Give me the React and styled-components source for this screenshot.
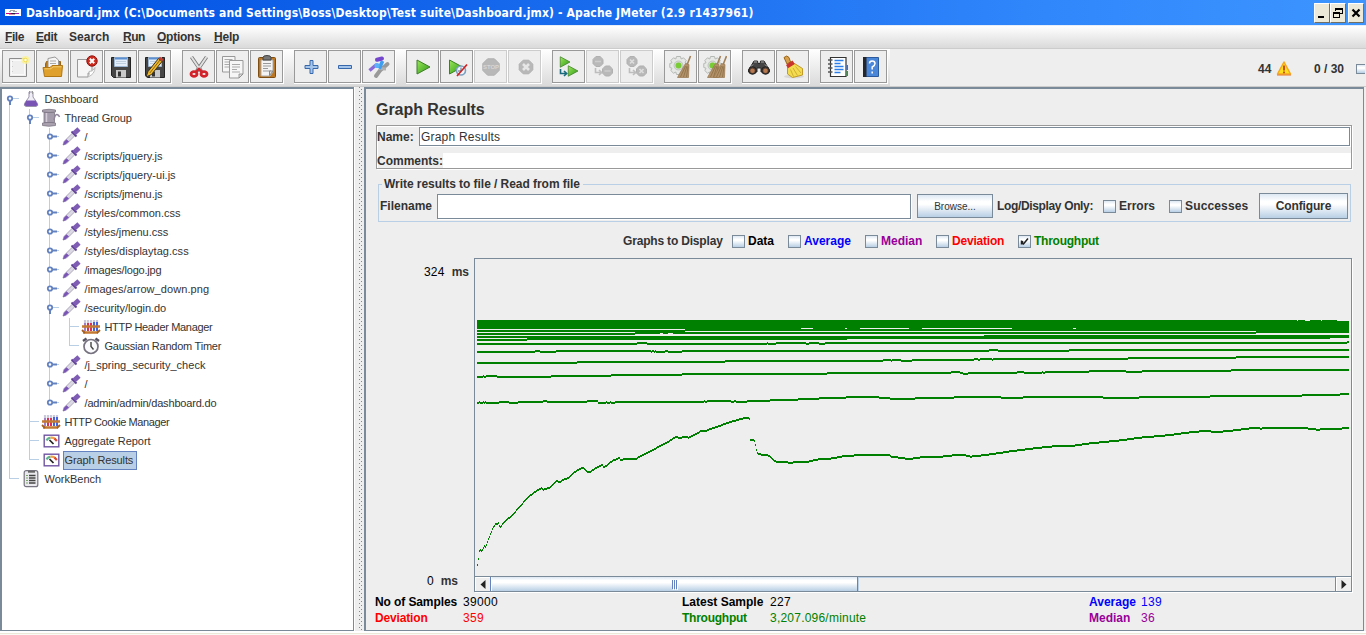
import React from 'react';
import styled, { createGlobalStyle, css } from 'styled-components';

const Global = createGlobalStyle`
  * { box-sizing: border-box; }
  body { margin: 0; background: #eee; overflow: hidden; }
`;

const metal = 'linear-gradient(180deg, #dde8f3 0%, #fff 30%, #fff 42%, #b8cfe5 100%)';
const edge = '#7a8a99';

const Window = styled.div`
  width: 1366px;
  height: 635px;
  display: flex;
  flex-direction: column;
  background: #eee;
  color: #333;
  font-family: 'Liberation Sans', Arial, sans-serif;
  font-size: 12px;
  line-height: 14px;
  white-space: pre;
  overflow: hidden;
`;
const Label = styled.span`
  font-weight: ${p => (p.$plain ? 400 : 700)};
  letter-spacing: ${p => p.$ls || 0}px;
  color: ${p => p.$color || 'inherit'};
  width: ${p => (p.$w ? `${p.$w}px` : 'auto')};
  flex: none;
`;
const Spacer = styled.span`
  width: ${p => p.$w}px;
  flex: none;
`;

/* title bar */
const TitleBar = styled.header`
  height: 25px;
  flex: none;
  display: flex;
  align-items: center;
  padding: 0 2px 0 5px;
  background: linear-gradient(90deg, #0054e3 0%, #0a5ce8 18%, #1a6cee 45%, #2f86fb 75%, #3d95ff 100%);
  color: #fff;
`;
const TitleText = styled.h1`
  flex: 1;
  margin: 0 0 0 5px;
  font: 700 12px/16px 'DejaVu Sans Condensed', 'DejaVu Sans', sans-serif;
  font-stretch: condensed;
  letter-spacing: 0.15px;
`;
const WinButton = styled.button`
  width: 16px;
  height: 20px;
  margin: 0 0 0 ${p => (p.$gap ? 2 : 0)}px;
  padding: 0;
  display: flex;
  border: 1px solid;
  border-color: #fff #716f64 #716f64 #fff;
  background: #ece9d8;
`;

/* menu */
const MenuBar = styled.nav`
  height: 24px;
  flex: none;
  display: flex;
  align-items: center;
  padding: 0 0 1px 5px;
  border-top: 1px solid #e8eef8;
  border-bottom: 1px solid #ccc;
  background: linear-gradient(180deg, #fff, #dadada);
`;
const MenuItem = styled.span`
  width: ${p => p.$w}px;
  font-weight: 700;
  letter-spacing: ${p => p.$ls || 0}px;
`;
const Mnemonic = styled.span`
  text-decoration: underline;
  text-decoration-thickness: 1px;
  text-underline-offset: 1px;
  text-decoration-skip-ink: none;
`;

/* toolbar */
const ToolBar = styled.div`
  height: 37px;
  flex: none;
  display: flex;
  justify-content: space-between;
`;
const ToolButtons = styled.div`
  width: 890px;
  display: flex;
  gap: 10px;
  padding: 1px 0 0 2px;
  background: linear-gradient(180deg, #fff, #dadada);
`;
const ToolGroup = styled.div`display: flex;`;
const ToolButton = styled.button`
  width: 34px;
  height: 34px;
  padding: 0;
  border: 0;
  background: #fff;
  display: flex;
`;
const ToolFace = styled.span`
  width: 33px;
  height: 33px;
  display: flex;
  align-items: center;
  justify-content: center;
  border: 1px solid ${p => (p.$off ? '#ccc' : '#999')};
  background: #eee;
`;
const Status = styled.div`
  display: flex;
  align-items: center;
  padding-top: 2px;
`;
const HeapBar = styled.span`
  width: 9px;
  height: 10px;
  margin-left: 12px;
  margin-right: 1px;
  border: 1px solid ${edge};
  border-right: 0;
  background: ${metal};
`;

/* split */
const Split = styled.main`
  flex: 1;
  display: flex;
  border-top: 1px solid #ccc;
  min-height: 0;
`;
const Footer = styled.footer`
  height: 4px;
  flex: none;
  border-top: 2px solid #fff;
  border-bottom: 1px solid #faf9f4;
  background: #ece9d8;
`;
const TreePane = styled.section`
  width: 354px;
  flex: none;
  border: solid ${edge};
  border-width: 2px 1px 1px 2px;
  background: #fff;
  padding-top: 1px;
`;
const Divider = styled.div`
  width: 10px;
  flex: none;
  padding-left: 4px;
  border-left: 1px solid #fff;
`;
const Dots = styled.div`
  width: 4px;
  height: 100%;
  background-image: linear-gradient(#7a8a99, #7a8a99), linear-gradient(#7a8a99, #7a8a99);
  background-size: 1px 4px, 1px 4px;
  background: conic-gradient(from 0deg at 1px 1px, transparent 75%, #7a8a99 0) 0 0 / 4px 4px,
    conic-gradient(from 0deg at 1px 1px, transparent 75%, #7a8a99 0) 2px 2px / 4px 4px;
`;
const Row = styled.div`
  height: 19px;
  display: flex;
  align-items: center;
  font-size: 11px;
`;
const NodeIcon = styled.span`
  width: 20px;
  height: 19px;
  margin: -1px 1px 1px -1px;
  display: flex;
  align-items: center;
  justify-content: center;
  flex: none;
`;
const NodeName = styled.span`
  line-height: 17px;
  height: 19px;
  padding: 0 2px 0 0.5px;
  margin-left: 1px;
  border: 1px solid transparent;
  letter-spacing: ${p => p.$ls || 0}px;
  ${p => p.$selected && css`
    width: 74px;
    background: #b8cfe5;
    border-color: #6382bf;
  `}
`;

/* right pane */
const ResultPane = styled.section`
  flex: 1;
  min-width: 0;
  margin-right: 2px;
  padding: 0 11px 0 9px;
  border: solid ${edge};
  border-width: 2px 1px 1px 2px;
  display: flex;
  flex-direction: column;
`;
const Heading = styled.h2`
  margin: 11px 0 0 1px;
  height: 25px;
  font-size: 16px;
  line-height: 20px;
  font-weight: 700;
  letter-spacing: -0.05px;
`;
const InfoBox = styled.div`
  margin-left: 1px;
  height: 44px;
  flex: none;
  border: 1px solid #999;
  box-shadow: inset 1px 1px #fff, 1px 1px #fff;
  padding: 1px 1px 0 0;
`;
const InfoRow = styled.div`
  display: flex;
  align-items: center;
  height: ${p => p.$h}px;
  margin-top: ${p => p.$mt || 0}px;
  margin-right: ${p => p.$mr || 0}px;
`;
const Field = styled.div`
  flex: ${p => (p.$w ? 'none' : 1)};
  width: ${p => (p.$w ? `${p.$w}px` : 'auto')};
  height: ${p => p.$h}px;
  padding-left: 1px;
  border: ${p => (p.$bare ? 0 : 1)}px solid ${edge};
  box-shadow: ${p => (p.$bare ? 'none' : '1px 1px #fff')};
  background: #fff;
  line-height: 19px;
`;
const FileBox = styled.fieldset`
  margin: 8px 1px 0 3px;
  height: 45px;
  flex: none;
  min-width: 0;
  padding: 1px 1px 0 0;
  border: 1px solid #b8cfe5;
  display: flex;
  align-items: flex-start;
`;
const Legend = styled.legend`
  margin-left: 3px;
  padding: 0 3px 0 2px;
  font-weight: 700;
  letter-spacing: -0.05px;
  line-height: 14px;
`;
const FileRow = styled.div`
  display: flex;
  align-items: center;
  height: 28px;
  padding-left: 1px;
`;
const Button = styled.button`
  width: ${p => p.$w}px;
  height: ${p => p.$h}px;
  padding: 0;
  margin: 0 0 0 ${p => p.$ml}px;
  border: 1px solid ${edge};
  background: ${metal};
  color: #333;
  font: ${p => (p.$small ? '400 10px' : '700 12px')} 'Liberation Sans', Arial, sans-serif;
  letter-spacing: ${p => p.$ls || 0}px;
  flex: none;
`;
const CheckItem = styled.label`
  width: ${p => p.$w}px;
  display: flex;
  align-items: center;
  gap: 3px;
  flex: none;
`;
const Box = styled.span`
  width: 13px;
  height: 13px;
  border: 1px solid ${edge};
  background: ${metal};
  display: flex;
  flex: none;
`;
const Series = styled.div`
  display: flex;
  align-items: center;
  height: 20px;
  margin: 9px 0 0 248px;
  flex: none;
`;
const GraphRow = styled.div`
  display: flex;
  height: 334px;
  margin-top: 7px;
  flex: none;
`;
const Axis = styled.div`
  width: 99px;
  flex: none;
  display: flex;
  flex-direction: column;
  justify-content: space-between;
  padding: 7px 0 4px;
`;
const AxisLabel = styled.div`
  display: flex;
  gap: 7px;
  padding-left: ${p => p.$pl}px;
`;
const Plot = styled.div`
  width: 878px;
  border: 1px solid ${edge};
  box-shadow: 1px 1px #fff;
  display: flex;
  flex-direction: column;
`;
const Canvas = styled.div`height: 317px; padding-left: 2px; overflow: hidden;`;
const ScrollBar = styled.div`
  height: 15px;
  flex: none;
  display: flex;
  border-top: 1px solid ${edge};
`;
const Arrow = styled.span`
  width: 15px;
  display: flex;
  align-items: center;
  justify-content: center;
  box-shadow: inset 1px 1px #fff;
`;
const Thumb = styled.span`
  width: 368px;
  border: 1px solid #6382bf;
  border-width: 0 1px;
  box-shadow: 1px 0 #b8cfe5, inset 1px 0 #fff;
  background: linear-gradient(180deg, #dde8f3, #fff 25%, #fff 40%, #b8cfe5);
  display: flex;
  align-items: center;
  justify-content: center;
  gap: 1px;
`;
const Grip = styled.i`width: 1px; height: 9px; background: #6382bf; box-shadow: 1px 1px #fff;`;
const Track = styled.span`flex: 1; border-right: 1px solid ${edge}; box-shadow: inset 0 1px #b8cfe5;`;
const Stats = styled.div`
  display: grid;
  grid-template-columns: 88px 219px 88px 319px 52px 1fr;
  grid-auto-rows: 16px;
  margin-top: 3px;
`;

/* toolbar drawings */
const S = ({ children, size = 24 }) => (
  <svg width={size} height={size} viewBox="0 0 24 24" fill="none">{children}</svg>
);
const Page = ({ x = 0, y = 0, w = 15, h = 18 }) => (
  <g transform={`translate(${x} ${y})`}>
    <path d={`M.5 .5H${w}V${h - 4}L${w - 4} ${h}H.5Z`} fill="#f6f6f6" stroke="#999" />
    <path d={`M${w} ${h - 4}H${w - 4}V${h}Z`} fill="#ddd" stroke="#888" strokeWidth=".8" />
  </g>
);
const Lines = ({ x, y, n = 4, w = 8, c = '#aaa' }) => (
  <path d={Array.from({ length: n }, (_, i) => `M${x} ${y + i * 2.5}h${i % 3 === 2 ? w - 3 : w}`).join('')} stroke={c} />
);
const Play = ({ x = 0, y = 0, s = 1 }) => (
  <path transform={`translate(${x} ${y}) scale(${s})`} d="M1 1L14 8L1 15Z" fill="url(#play)" stroke="#3f7d2a" strokeWidth="1" />
);
const Floppy = () => (
  <g>
    <path d="M2.500 2.500H21.500V22.500H4.500L2.500 20.500Z" fill="#454545" stroke="#222" />
    <path d="M5.500 2.500h13v9h-13z" fill="#e4eefa" stroke="#9bb4d2" />
    <path d="M6 3.500h12" stroke="#5b8fd0" strokeWidth="2" />
    <path d="M7 6.500h10M7 8.500h10" stroke="#c0cfe0" />
    <path d="M7 15h10v7.500H7z" fill="#c9c9c9" />
    <path d="M9 16.500h3v5H9z" fill="#333" />
  </g>
);
const Cog = () => (
  <g>
    <path d="M7.500 1.500h4l.7 2.500 2.300-1.200 2.700 2.700-1.200 2.300 2.500.7v4l-2.500.7 1.200 2.300-2.700 2.700-2.300-1.200-.7 2.500h-4l-.7-2.500-2.300 1.200-2.700-2.700L3 13.200.8 12.500v-4L3 7.800 1.800 5.500l2.700-2.700L6.800 4z" fill="#e6e8e6" stroke="#b4b8b4" />
    <circle cx="9.500" cy="10.500" r="4.500" fill="#d4dccf" stroke="#c0c4c0" />
    <circle cx="9.500" cy="10.500" r="3" fill="#79cc35" />
  </g>
);
const Broom = ({ x = 0 }) => (
  <g transform={`translate(${x} 0)`}>
    <path d="M21.500 1L18 10" stroke="#a08058" strokeWidth="1.600" />
    <path d="M16.500 8.500L20 9.500L19.500 22.500L8.500 22.500L11.500 17Z" fill="#b3926a" stroke="#96764c" strokeWidth=".7" />
    <path d="M16.500 11L11.500 22M18 11L14.500 22M19 11.500L17.500 22" stroke="#85683f" strokeWidth=".7" />
  </g>
);
const Oct = ({ cx, cy, r }) => {
  const a = r * 0.414;
  return <path d={`M${cx - a} ${cy - r}H${cx + a}L${cx + r} ${cy - a}V${cy + a}L${cx + a} ${cy + r}H${cx - a}L${cx - r} ${cy + a}V${cy - a}Z`} fill="#b8b8b8" stroke="#b0b0b0" />;
};
const Cross = ({ cx, cy, r, w = 1.6, c = '#ddd' }) => (
  <path d={`M${cx - r} ${cy - r}L${cx + r} ${cy + r}M${cx + r} ${cy - r}L${cx - r} ${cy + r}`} stroke={c} strokeWidth={w} />
);
const Hook = ({ x, y, c }) => <path transform={`translate(${x} ${y})`} d="M1 0V4.500H7M4.500 2L7.200 4.500L4.500 7" stroke={c} strokeWidth="1.600" />;

const tools = {
  fresh: <S><path d="M2.500 3.500H19.500V21.500H2.500Z" fill="#efefef" stroke="#8c8c8c" /><path d="M4.500 5.500H17.500V19.500H4.500Z" stroke="#fafafa" /><path d="M5.500 6V19" stroke="#ccc" strokeDasharray="1 4" /><circle cx="18.500" cy="5" r="4" fill="#fbf191" opacity=".8" /><circle cx="18.500" cy="5" r="1.800" fill="#fffde0" stroke="#f0dc50" /></S>,
  open: <S><path d="M4.500 9L5.500 6.500H19.500V18H4.500Z" fill="#b8791b" stroke="#9c6310" /><path d="M7 3.500L14 2L17.500 5V14H7Z" fill="#f5f5f5" stroke="#999" /><path d="M9 6h6M9 8.500h6" stroke="#aaa" /><path d="M2 12.500H9L11 10.500H21.500L20.500 21.500H3.500Z" fill="#dfa02c" stroke="#b27612" /><path d="M3.500 13.800H10L12 11.800H20.500" stroke="#f4cb6d" /></S>,
  close: <S><Page x={2} y={4} w={15} h={18} /><path d="M20 12.500Q20 19 13 22Q15 19 14 16.500Q18 17 20 12.500" fill="#fff" stroke="#bbb" /><circle cx="17" cy="6" r="5.200" fill="#cf2b1e" stroke="#8e1611" /><Cross cx={17} cy={6} r={2.2} w={2} c="#fff" /></S>,
  save: <S><Floppy /></S>,
  saveAs: <S><Floppy /><path d="M3 22L5 16.500L15.500 3.500L19 6.500L8.500 19.500Z" fill="#f0b92b" stroke="#3a3222" /><path d="M15.500 3.500L17 1.800L20.500 4.600L19 6.500Z" fill="#c53b2e" /><path d="M6.800 18L17 5" stroke="#8b6413" /></S>,
  cut: <S><path d="M4.500 2L14.500 16.500M19.500 2L9.500 16.500" stroke="#777" strokeWidth="3.600" /><path d="M4.500 2L14 16M19.500 2L10 16" stroke="#e1e1e1" strokeWidth="2" /><ellipse cx="7" cy="19" rx="3" ry="2.300" stroke="#d3222a" strokeWidth="2.800" /><ellipse cx="17" cy="19" rx="3" ry="2.300" stroke="#d3222a" strokeWidth="2.800" /><path d="M9 17L12 14L15 17" stroke="#d3222a" strokeWidth="2.400" /></S>,
  copy: <S><Page x={1} y={1} w={13} h={16} /><Lines x={3.5} y={4.5} w={8} /><Page x={8} y={5} w={14} h={18} /><Lines x={11} y={9.5} w={8} /></S>,
  paste: <S><rect x="3.500" y="2.500" width="17" height="20" rx="1" fill="#bb7723" stroke="#7d4d12" /><path d="M6 5h12v12l-3 4H6z" fill="#f4f4f4" stroke="#aaa" /><path d="M8 2.500Q8 .5 12 .5T16 2.500V5H8Z" fill="#777" stroke="#444" /><Lines x={8} y={8.5} w={8} c="#999" /><path d="M18 16h-3.500v4.500z" fill="#ddd" stroke="#888" /></S>,
  plus: <S><path d="M11 5.500h3v5h5v3h-5v5h-3v-5h-5v-3h5z" fill="#a5c4ea" stroke="#3868ac" /></S>,
  minus: <S><path d="M5.500 10.500h13v3h-13z" fill="#a5c4ea" stroke="#3868ac" /></S>,
  toggle: <S><path d="M9 21L13 15.500L20.500 9" stroke="#999" strokeWidth="4" strokeLinecap="round" /><path d="M12 13.500L19 14" stroke="#b0b0b0" strokeWidth="3" /><path d="M8 9.500L13 12L15.500 6" stroke="#3f9df0" strokeWidth="3.600" /><path d="M2.500 15.500L9 10" stroke="#8a68d8" strokeWidth="3.400" /><path d="M10 4.800L15 3.500" stroke="#7446ce" strokeWidth="4" strokeLinecap="round" /><circle cx="10" cy="10.500" r="2.600" fill="#5bb2f7" /></S>,
  run: <S><Play x={5} y={4} /></S>,
  runNow: <S><Play x={3.5} y={4} /><circle cx="16" cy="15.500" r="4.500" fill="#eef5fb" stroke="#7da0c0" strokeWidth="1.600" /><path d="M16 12.500V16H13" stroke="#567" /><path d="M12 21L22 9.500" stroke="#d01f1f" strokeWidth="1.600" /></S>,
  stop: <S><Oct cx={12} cy={12} r={8.2} /><text x="12" y="14.300" textAnchor="middle" fontSize="6" fontWeight="700" fill="#d6d6d6" fontFamily="Liberation Sans">STOP</text></S>,
  shutdown: <S><Oct cx={13} cy={12} r={6.8} /><Cross cx={13} cy={12} r={3} w={2.6} c="#e6e6e6" /></S>,
  remote: <S><Play x={2.5} y={1} s={0.75} /><Play x={10.5} y={10} s={0.75} /><Hook x={2.5} y={14} c="#196a7d" /></S>,
  remoteStop: <S><Oct cx={7} cy={6.5} r={5} /><Oct cx={16.5} cy={16} r={5} /><path d="M4 6.500h6M13.500 16h6" stroke="#ccc" strokeWidth="1.500" /><Hook x={3.5} y={13} c="#bdbdbd" /></S>,
  remoteShut: <S><Oct cx={7} cy={6.5} r={5} /><Cross cx={7} cy={6.5} r={2} /><Oct cx={16.500} cy={16} r={5} /><Cross cx={16.5} cy={16} r={2} /><Hook x={3.5} y={13} c="#bdbdbd" /></S>,
  clear: <S><Cog /><Broom /></S>,
  clearAll: <S><Cog /><Broom x={-4} /><Broom x={2} /></S>,
  search: <S><path d="M4 11L7 6H10.500L11 8.500H13L13.500 6H17L20 11L22.500 15V17H14V13H10V17H1.500V15Z" fill="#454545" stroke="#2a2a2a" /><circle cx="5.500" cy="15.500" r="3.800" fill="#4a3a32" stroke="#222" /><circle cx="18.500" cy="15.500" r="3.800" fill="#4a3a32" stroke="#222" /><circle cx="5.500" cy="15.800" r="2.300" fill="#b8784e" /><circle cx="18.500" cy="15.800" r="2.300" fill="#b8784e" /><path d="M7 7h3M14 7h3M4 11.500l2-2M20 11.500l-2-2" stroke="#aaa" /></S>,
  reset: <S><ellipse cx="13" cy="21.500" rx="10" ry="1.800" fill="#d8d8d8" /><path d="M3 2.500Q6 -.5 8 2.500L9.500 7L6 9Z" fill="#d8a04c" stroke="#9a6413" /><path d="M6.500 12L13.500 8.500L21.500 13.500V20L11.500 22.500L6.500 19Z" fill="#f3dc4e" stroke="#c09a2a" /><path d="M5 10L11.500 5.500L13.800 9L7 13.200Z" fill="#c9332b" /><path d="M9.500 14.500L12.500 21.500M12 13L16.500 20.500M14.500 11.500L20 18" stroke="#cfae38" /></S>,
  functions: <S><path d="M5.500 2.500H21V21.500H5.500Z" fill="#fff" stroke="#333" strokeWidth="1.200" /><path d="M3 5h4.500M3 9h4.500M3 13h4.500M3 17h4.500" stroke="#555" strokeWidth="1.300" /><path d="M9.500 5.500h9M9.500 8.500h6M9.500 11.500h9M9.500 14.500h9M9.500 17.500h6" stroke="#2c7fe8" strokeWidth="1.300" /><path d="M21.500 10h1.500v5h-1.500z" fill="#2c6fe0" /><path d="M21.500 16h1.500v5h-1.500z" fill="#2f9a3a" /></S>,
  help: <S><path d="M5 2.500H19.500V21.500H5Z" fill="#4b87d8" stroke="#2c5a9e" /><path d="M4 2H7.500V22H4Z" fill="#24272c" /><path d="M10.500 8.500Q10.500 6 13.200 6T16 8.500Q16 10.500 13.200 12V14.500M13.200 16.500V18.500" stroke="#fff" strokeWidth="1.500" /></S>,
};
const groups = [
  ['fresh', 'open', 'close', 'save', 'saveAs'],
  ['cut', 'copy', 'paste'],
  ['plus', 'minus', 'toggle'],
  ['run', 'runNow', 'stop', 'shutdown'],
  ['remote', 'remoteStop', 'remoteShut'],
  ['clear', 'clearAll'],
  ['search', 'reset'],
  ['functions', 'help'],
];
const disabled = ['stop', 'shutdown', 'remoteStop', 'remoteShut'];

/* tree drawings */
const T = ({ children }) => <svg width="20" height="19" viewBox="0 0 20 19" fill="none">{children}</svg>;
const Rack = () => (
  <T>
    <path d="M4 3v9M7 3v9M10 3v9M13 3v9M16 3v9" stroke="#c9cbdc" strokeWidth="2.200" />
    <path d="M4 6v8" stroke="#a07fc8" strokeWidth="2" /><path d="M7 6v8M10 6v8" stroke="#d3305a" strokeWidth="2" /><path d="M13 5v9M16 5v9" stroke="#4a62d8" strokeWidth="2" />
    <path d="M1 9.500h18M2 15.500h15" stroke="#c47a32" strokeWidth="2.400" /><path d="M1 13l3 3M19 13l-3 3" stroke="#a8601e" strokeWidth="1.800" />
  </T>
);
const Meter = () => (
  <T>
    <rect x="3.200" y="4.200" width="14.600" height="11.600" fill="#fff" stroke="#7055a4" strokeWidth="1.400" />
    <path d="M5.500 9.500Q6.500 7 9.500 6.800" stroke="#5cb78f" strokeWidth="2.200" /><path d="M9.500 6.800Q12.500 6.300 14.500 8.200" stroke="#f0a04a" strokeWidth="2.200" /><path d="M13.500 7.500L15.800 10" stroke="#e0472f" strokeWidth="2.200" /><path d="M8.500 9L12.500 13" stroke="#222" strokeWidth="1.700" />
  </T>
);
const nodeIcons = {
  flask: <T><path d="M8 3h4v5l4.500 6.500q1 2.500-1.500 3H5q-2.500-.5-1.500-3L8 8z" fill="#f1eff6" stroke="#9a93ab" /><path d="M5.500 11.500h9l2 3.500q.5 2-1.500 2H5Q3 17 3.500 15z" fill="#7a54b4" /><path d="M8.500 2V5M11.500 2V5" stroke="#999" /></T>,
  spool: <T><path d="M1.500 2Q8 .500 14.500 2V4Q8 5 1.500 4ZM1.500 15Q8 13.500 14.500 15V17.500Q8 19 1.500 17.500Z" fill="#a9a1ae" stroke="#7d7684" strokeWidth=".8" /><path d="M3 4.500h10.500v10h-10.500z" fill="#a49bab" stroke="#7d7684" strokeWidth=".8" /><path d="M5.500 5v9" stroke="#d4cdd8" strokeWidth="1.500" /><path d="M13 12Q14 6 16 6.500T18.500 9" stroke="#8f8499" strokeWidth="1.400" /></T>,
  dropper: <T><path d="M2 18L3 14.500L12 5.500L14.500 8L5.500 17Z" fill="#dcd9e4" stroke="#a69fb4" strokeWidth=".9" /><path d="M2 18.300L3.200 14.500L5.500 12.300L8 14.500L4.500 17.300Z" fill="#7b55b6" /><path d="M10.500 4.500L15.500 9.500" stroke="#5f3f96" strokeWidth="1.800" /><path d="M13 6.500L18 2" stroke="#7f5db4" strokeWidth="4.800" /></T>,
  rack: <Rack />,
  clock: <T><circle cx="10" cy="10.500" r="7" fill="#fafafc" stroke="#77727f" strokeWidth="1.700" /><path d="M10 6V10.500L12.500 13.500" stroke="#444" strokeWidth="1.400" /><path d="M2 5L5.500 2.500M14.500 2.500L18 5" stroke="#575261" strokeWidth="2.400" /></T>,
  meter: <Meter />,
  bench: <T><rect x="3.200" y="1.700" width="13.600" height="16" rx="2" fill="#eaeaee" stroke="#777380" strokeWidth="1.200" /><path d="M7 2.800h7" stroke="#666" strokeWidth="1.800" /><path d="M8 6.500h6.500M8 9h6.500M8 11.500h6.500M8 14h6.500" stroke="#444" strokeWidth="1.300" /><path d="M5 6.500h2M5 9h2M5 11.500h2M5 14h2" stroke="#79a866" strokeWidth="1.200" /></T>,
};
const nodes = [
  [0, 'flask', 'Dashboard', 'open'],
  [1, 'spool', 'Thread Group', 'open', -0.1],
  [2, 'dropper', '/', 'closed'],
  [2, 'dropper', '/scripts/jquery.js', 'closed'],
  [2, 'dropper', '/scripts/jquery-ui.js', 'closed'],
  [2, 'dropper', '/scripts/jmenu.js', 'closed', -0.05],
  [2, 'dropper', '/styles/common.css', 'closed'],
  [2, 'dropper', '/styles/jmenu.css', 'closed'],
  [2, 'dropper', '/styles/displaytag.css', 'closed', 0.04],
  [2, 'dropper', '/images/logo.jpg', 'closed', -0.2],
  [2, 'dropper', '/images/arrow_down.png', 'closed', 0.08],
  [2, 'dropper', '/security/login.do', 'open', -0.05],
  [3, 'rack', 'HTTP Header Manager', null, -0.33],
  [3, 'clock', 'Gaussian Random Timer', null, -0.24],
  [2, 'dropper', '/j_spring_security_check', 'closed', 0.02],
  [2, 'dropper', '/', 'closed'],
  [2, 'dropper', '/admin/admin/dashboard.do', 'closed', -0.18],
  [1, 'rack', 'HTTP Cookie Manager', null, -0.4],
  [1, 'meter', 'Aggregate Report', null, -0.05],
  [1, 'meter', 'Graph Results', null, -0.12],
  [0, 'bench', 'WorkBench', null],
];
const continues = (i, k) => {
  for (let j = i + 1; j < nodes.length; j++) {
    if (nodes[j][0] < k) return false;
    if (nodes[j][0] === k) return true;
  }
  return false;
};
const Guide = ({ i, k }) => {
  const [depth, , , handle] = nodes[i];
  const own = depth === k;
  const more = continues(i, k);
  return (
    <svg width="20" height="19" shapeRendering="crispEdges">
      {own && i > 0 && <path d="M7 0h1v9h-1z" fill="#b8cfe5" />}
      {more && <path d={own ? 'M7 9h1v10h-1z' : 'M7 0h1v19h-1z'} fill="#b8cfe5" />}
      {own && <path d="M7 8h10v1h-10z" fill="#b8cfe5" />}
      {own && handle && (
        <g shapeRendering="auto">
          <circle cx="8" cy="8.500" r="2.200" fill="#fff" stroke="#6382bf" strokeWidth="1.800" />
          <path d={handle === 'open' ? 'M8 10.500V15' : 'M10 8.500H15'} stroke="#6382bf" strokeWidth="2" />
        </g>
      )}
    </svg>
  );
};

/* plot data, in thirds of a pixel: the right half starts 1530 units after the left one */
const half = 1530;
const curve = [
  [381, 765], [385, 740], [388, 714], [391, 725], [398, 719], [400, 708], [406, 711], [412, 692], [420, 672], [427, 655], [436, 641], [440, 644], [445, 637], [448, 654], [460, 637], [490, 612], [500, 597], [510, 589], [520, 576], [535, 560], [560, 541], [575, 534], [577, 540], [600, 532], [607, 523], [618, 514], [622, 514], [628, 518], [640, 508], [652, 505], [665, 492], [685, 478], [697, 473], [703, 478], [710, 487], [720, 486], [730, 478], [757, 464], [760, 473], [770, 465], [785, 453], [807, 444], [811, 452], [820, 447], [838, 446], [845, 448], [858, 446], [880, 433], [920, 413], [945, 400], [978, 380], [988, 385], [1000, 381], [1015, 383], [1030, 376], [1055, 361], [1060, 365], [1080, 357], [1105, 349], [1120, 342], [1150, 333], [1185, 323], [1199, 326],
  [1200, 390], [1211, 390], [1214, 399], [1217, 413], [1219, 429], [1225, 433], [1252, 435], [1262, 443], [1276, 455], [1310, 455], [1315, 459], [1330, 457], [1370, 456], [1390, 451], [1410, 447], [1450, 445], [1480, 438], [1520, 436],
  ...[[0, 435], [30, 434], [70, 434], [88, 436], [95, 441], [130, 444], [140, 447], [165, 445], [185, 441], [230, 442], [260, 438], [290, 435], [315, 436], [330, 440], [350, 438], [390, 433], [450, 424], [530, 414], [600, 407], [640, 407], [690, 400], [780, 391], [840, 383], [920, 376], [990, 367], [1030, 363], [1075, 366], [1130, 360], [1185, 353], [1200, 356], [1225, 353], [1325, 353], [1370, 359], [1400, 357], [1440, 357], [1455, 353], [1470, 354]].map(([x, y]) => [x + half, y]),
];
const steps = [
  [[381, 330], [1005, 329]],
  [[381, 333], [855, 332], [half + 1188, 331]],
  [[381, 336], [half + 372, 335]],
  [[381, 339], [531, 338], [1491, 337], [half + 1410, 336]],
  [[381, 343], [861, 342], [891, 343], [1250, 342], [1254, 343], [1278, 342], [1368, 343], [1378, 342], [1408, 343], [1425, 342], [half + 1461, 341]],
  [[381, 351], [555, 350], [570, 351], [618, 350], [903, 351], [906, 350], [912, 351], [915, 350], [918, 351], [945, 350], [954, 351], [996, 350], [half + 387, 349], [half + 414, 350], [half + 627, 349]],
  [[381, 362], [681, 361], [1125, 360], [half + 69, 359], [half + 93, 360], [half + 96, 359], [half + 123, 360], [half + 156, 359], [half + 342, 358], [half + 354, 359], [half + 360, 358], [half + 396, 359], [half + 399, 358], [half + 804, 357], [half + 1128, 356]],
  [[381, 376], [399, 375], [402, 376], [408, 375], [441, 376], [603, 375], [783, 374], [996, 373], [1431, 372], [half + 273, 371], [half + 300, 372], [half + 309, 373], [half + 324, 372], [half + 471, 371], [half + 492, 372], [half + 546, 371], [half + 549, 372], [half + 555, 371], [half + 687, 370], [half + 798, 371], [half + 846, 370], [half + 1113, 369]],
  [[381, 402], [387, 401], [390, 402], [399, 401], [402, 402], [405, 401], [408, 402], [447, 401], [477, 402], [504, 401], [579, 400], [591, 401], [711, 400], [744, 402], [768, 401], [771, 402], [780, 401], [783, 402], [795, 401], [1062, 400], [1065, 401], [1071, 400], [1143, 401], [1152, 400], [1158, 401], [1191, 400], [1260, 399], [1344, 398], [1407, 397], [1488, 396], [half + 57, 397], [half + 90, 398], [half + 165, 397], [half + 282, 396], [half + 423, 397], [half + 489, 396], [half + 729, 397], [half + 837, 396], [half + 1050, 395], [half + 1326, 394], [half + 1440, 393]],
];
const trace = steps.map(line =>
  line.map(([x, y], i) => {
    const x0 = Math.round(x / 3) - 127;
    const x1 = i + 1 < line.length ? Math.round(line[i + 1][0] / 3) - 127 : 872;
    return `M${x0} ${y - 259}H${x1}v2H${x0}Z`;
  }).join('')
).join('');
let seg = 0;
let dots = '';
for (let x = 0; x < 872; x++) {
  const t = (x + 127) * 3;
  while (seg < curve.length - 2 && curve[seg + 1][0] <= t) seg++;
  const [ax, ay] = curve[seg];
  const [bx, by] = curve[seg + 1];
  const y = Math.round((ay + ((by - ay) * (t - ax)) / (bx - ax)) / 3) + 50;
  dots += `M${x} ${y}h1v2h-1Z`;
}
const slits = 'M324 69h12v1h-12zM368 69h2v1h-2zM383 69h49v1h-49zM445 69h90v1h-90zM596 69h3v1h-3zM820 61h1v1h-1zM828 61h5v1h-5zM844 61h1v1h-1zM860 61h12v1h-12zM183 74h3v1h-3zM191 74h5v1h-5z';

const Check = ({ on, children, w, ls, color }) => (
  <CheckItem $w={w}>
    <Box>{on && <svg width="11" height="11"><path d="M2.500 4.500V8.500M3.500 5V8.500M4 8.500L9 2.500" stroke="#222" strokeWidth="1.500" fill="none" /></svg>}</Box>
    <Label $ls={ls} $color={color}>{children}</Label>
  </CheckItem>
);

const menus = [['File', 0, 31, -0.4], ['Edit', 0, 33, -0.4], ['Search', -1, 54, 0.05], ['Run', 0, 34, -0.5], ['Options', 0, 57, -0.25], ['Help', 0, 40, -0.2]];

export default function App() {
  return (
    <Window>
      <Global />
      <TitleBar>
        <svg width="16" height="8" shapeRendering="crispEdges">
          <defs><linearGradient id="play" x1="0" y1="0" x2="1" y2="1"><stop offset="0" stopColor="#9be75c" /><stop offset="1" stopColor="#2a9a10" /></linearGradient></defs>
          <path d="M0 0h16v7H0z" fill="#fff" /><path d="M5 1h5v1H5zM4 2h2v1H4zM8 2h4v1H8z" fill="#aaa" /><path d="M1 4h5v1H1z" fill="#c07" /><path d="M6 4h5v1H6z" fill="#224" /><path d="M10 4h4v1h-4z" fill="#a2a" /><path d="M4 5h6v1H4z" fill="#d9a" />
        </svg>
        <TitleText>{'Dashboard.jmx (C:\\Documents and Settings\\Boss\\Desktop\\Test suite\\Dashboard.jmx) - Apache JMeter (2.9 r1437961)'}</TitleText>
        <WinButton><svg width="14" height="18" shapeRendering="crispEdges"><path d="M3 12h6v2H3z" /></svg></WinButton>
        <WinButton><svg width="14" height="18" fill="none" stroke="#000" shapeRendering="crispEdges"><path d="M4.500 7V4.500H11.500V9.500H9M4 5.500H12M2.500 8.500H8.500V13.500H2.500ZM2 9.500H9" /></svg></WinButton>
        <WinButton $gap><svg width="14" height="18"><path d="M3.500 5.500L10.500 12.500M10.500 5.500L3.500 12.500" stroke="#000" strokeWidth="2.200" /></svg></WinButton>
      </TitleBar>
      <MenuBar>
        {menus.map(([name, m, w, ls]) => (
          <MenuItem key={name} $w={w} $ls={ls}>{m < 0 ? name : <><Mnemonic>{name[0]}</Mnemonic>{name.slice(1)}</>}</MenuItem>
        ))}
      </MenuBar>
      <ToolBar>
        <ToolButtons>
          {groups.map((g, i) => (
            <ToolGroup key={i}>{g.map(t => <ToolButton key={t}><ToolFace $off={disabled.includes(t)}>{tools[t]}</ToolFace></ToolButton>)}</ToolGroup>
          ))}
        </ToolButtons>
        <Status>
          <Label $w={18} $ls={0.2}>44</Label>
          <svg width="16" height="15" viewBox="0 0 16 15" fill="none"><path d="M8 1L14.500 13H1.500Z" fill="#ffe01f" stroke="#f5a81c" strokeWidth="1.500" strokeLinejoin="round" /><path d="M1 14h14" stroke="#e8731a" /><path d="M8 4.500V9.500M8 10.500v1.800" stroke="#c2401c" strokeWidth="1.800" /></svg>
          <Spacer $w={22} />
          <Label $ls={0}>0 / 30</Label>
          <HeapBar />
        </Status>
      </ToolBar>
      <Split>
        <TreePane>
          {nodes.map(([depth, icon, name, , ls], i) => (
            <Row key={i}>
              {Array.from({ length: depth + 1 }, (_, k) => <Guide key={k} i={i} k={k} />)}
              <NodeIcon>{nodeIcons[icon]}</NodeIcon>
              <NodeName $ls={ls} $selected={i === 19}>{name}</NodeName>
            </Row>
          ))}
        </TreePane>
        <Divider><Dots /></Divider>
        <ResultPane>
          <Heading>Graph Results</Heading>
          <InfoBox>
            <InfoRow $h={19}><Label $w={42}>Name:</Label><Field $h={19}><Label $plain $ls={0.2}>Graph Results</Label></Field></InfoRow>
            <InfoRow $h={15} $mt={7} $mr={-1}><Label $w={66}>Comments:</Label><Field $bare $h={15} /></InfoRow>
          </InfoBox>
          <FileBox>
            <Legend>Write results to file / Read from file</Legend>
            <FileRow>
              <Label $w={57}>Filename</Label>
              <Field $w={474} $h={25} />
              <Button $w={76} $h={24} $ml={6} $small>Browse...</Button>
              <Spacer $w={4} />
              <Label $w={106} $ls={-0.35}>Log/Display Only:</Label>
              <Check w={66}>Errors</Check>
              <Check w={90} ls={0.15}>Successes</Check>
              <Button $w={89} $h={26} $ml={0} $ls={-0.15}>Configure</Button>
            </FileRow>
          </FileBox>
          <Series>
            <Label $w={109} $ls={-0.18}>Graphs to Display</Label>
            <Check w={56} color="#000">Data</Check>
            <Check w={77} color="#00f">Average</Check>
            <Check w={71} color="#909">Median</Check>
            <Check w={82} color="#f00" ls={-0.2}>Deviation</Check>
            <Check on color="#008000" ls={-0.25}>Throughput</Check>
          </Series>
          <GraphRow>
            <Axis>
              <AxisLabel $pl={49}><Label $plain $color="#000" $ls={0.2}>324</Label><Label>ms</Label></AxisLabel>
              <AxisLabel $pl={52}><Label $plain $color="#000">0</Label><Label>ms</Label></AxisLabel>
            </Axis>
            <Plot>
              <Canvas>
                <svg width="872" height="317" shapeRendering="crispEdges" fill="#008000">
                  <path d="M0 61h872v9H0zM208 70h508v1h-508zM50 78h822v1h-822z" />
                  <path d={trace} />
                  <path d={dots} />
                  <path d={slits} fill="#eee" />
                </svg>
              </Canvas>
              <ScrollBar>
                <Arrow><svg width="6" height="9"><path d="M5.500 0V9L.5 4.500Z" fill="#222" /></svg></Arrow>
                <Thumb><Grip /><Grip /><Grip /></Thumb>
                <Track />
                <Arrow><svg width="6" height="9"><path d="M.5 0V9L5.500 4.500Z" fill="#222" /></svg></Arrow>
              </ScrollBar>
            </Plot>
          </GraphRow>
          <Stats>
            <Label $ls={-0.1} $color="#000">No of Samples</Label><Label $plain $ls={0.33} $color="#000">39000</Label>
            <Label $color="#000">Latest Sample</Label><Label $plain $ls={0.33} $color="#000">227</Label>
            <Label $color="#00f">Average</Label><Label $plain $ls={0.33} $color="#00f">139</Label>
            <Label $ls={-0.15} $color="#f00">Deviation</Label><Label $plain $ls={0.33} $color="#f00">359</Label>
            <Label $ls={-0.25} $color="#008000">Throughput</Label><Label $plain $ls={0.22} $color="#008000">3,207.096/minute</Label>
            <Label $color="#909">Median</Label><Label $plain $ls={0.33} $color="#909">36</Label>
          </Stats>
        </ResultPane>
      </Split>
      <Footer />
    </Window>
  );
}
